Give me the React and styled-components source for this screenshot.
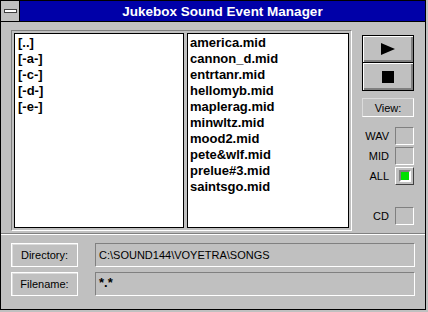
import React from 'react'
import styled, { createGlobalStyle } from 'styled-components'

const GlobalStyle = createGlobalStyle`
    html, body {
        margin: 0;
        padding: 0;
        background: #c0c0c0;
    }
`

const Window = styled.div`
    width: 426px;
    height: 310px;
    box-sizing: border-box;
    border: 1px solid #000;
    background: #c0c0c0;
    display: flex;
    flex-direction: column;
    font-family: "Liberation Sans", Arial, sans-serif;
    color: #000;
`

const TitleBar = styled.div`
    height: 20px;
    display: flex;
    border-bottom: 1px solid #000;
    background: #0000a8;
`

const SysButton = styled.div`
    width: 19px;
    height: 20px;
    box-sizing: border-box;
    background: #c0c0c0;
    border-right: 1px solid #000;
    display: flex;
    align-items: center;
    justify-content: center;

    span{
        display: block;
        width: 11px;
        height: 2px;
        background: #fff;
        border: 1px solid #404040;
    }
`

const Title = styled.div`
    flex: 1;
    display: flex;
    align-items: center;
    justify-content: center;
    color: #fff;
    font-weight: 700;
    font-size: 13.5px;
`

const Upper = styled.div`
    display: flex;
    padding: 8px 0 0 10px;
`

const Frame = styled.div`
    display: flex;
    gap: 3px;
    padding: 2px;
    border: 1px solid;
    border-color: #808080 #fff #fff #808080;
`

const ListBox = styled.div`
    width: ${p => p.w}px;
    height: 195px;
    box-sizing: border-box;
    border: 1px solid #000;
    background: #fff;
    padding: 1px 0 0 ${p => p.pad}px;
    font-size: 13px;
    font-weight: 700;
    line-height: 16px;
`

const Side = styled.div`
    width: 52px;
    margin-left: 10px;
    padding-top: 5px;
    display: flex;
    flex-direction: column;
`

const MediaButton = styled.div`
    height: 28px;
    box-sizing: border-box;
    border: 1px solid #000;
    box-shadow: inset 1px 1px 0 #fff, inset -2px -2px 0 #808080;
    display: flex;
    align-items: center;
    justify-content: center;
    & + &{
        border-top: none;
    }
`

const ViewButton = styled.div`
    margin-top: 7px;
    height: 19px;
    box-sizing: border-box;
    border: 1px solid;
    border-color: #dcdcdc #fff #fff #dcdcdc;
    font-size: 11px;
    display: flex;
    align-items: center;
    justify-content: center;
`

const CheckRow = styled.div`
    display: flex;
    justify-content: flex-end;
    align-items: center;
    gap: 6px;
    height: 18px;
    margin-top: ${p => p.top}px;
    font-size: 11px;
`

const CheckBox = styled.div`
    width: 19px;
    height: 18px;
    box-sizing: border-box;
    border: 1px solid;
    border-color: ${p => p.on ? '#fff #404040 #404040 #fff' : '#808080 #fff #fff #808080'};
    display: flex;
    align-items: center;
    justify-content: center;

    i{
        display: block;
        width: 8px;
        height: 8px;
        background: #00e000;
        border: 2px solid #808080;
        border-right-color: #fff;
        border-bottom-color: #fff;
    }
`

const Divider = styled.div`
    margin-top: 2px;
    border-top: 1px solid #808080;
    border-bottom: 1px solid #fff;
`

const Lower = styled.div`
    display: flex;
    flex-direction: column;
    gap: 5px;
    padding: 8px 0 0 10px;
`

const FieldRow = styled.div`
    display: flex;
    gap: 17px;
`

const LabelButton = styled.div`
    width: 67px;
    height: 24px;
    box-sizing: border-box;
    border: 1px solid;
    border-color: #fff #fff #fff #fff;
    box-shadow: inset 1px 1px 0 #dcdcdc;
    font-size: 11px;
    display: flex;
    align-items: center;
    justify-content: center;
`

const TextField = styled.div`
    width: 320px;
    height: 24px;
    box-sizing: border-box;
    border: 1px solid;
    border-color: #808080 #fff #fff #808080;
    padding: ${p => p.top ? '2px' : '0'} 0 0 3px;
    display: flex;
    align-items: ${p => p.top ? 'flex-start' : 'center'};
    font-size: ${p => p.top ? '13px' : '11px'};
    font-weight: ${p => p.top ? 700 : 400};
`

const dirs = ['[..]', '[-a-]', '[-c-]', '[-d-]', '[-e-]']
const files = ['america.mid', 'cannon_d.mid', 'entrtanr.mid', 'hellomyb.mid', 'maplerag.mid',
    'minwltz.mid', 'mood2.mid', 'pete&wlf.mid', 'prelue#3.mid', 'saintsgo.mid']

const App = () => {
  return (
    <>
      <GlobalStyle />
      <Window>
        <TitleBar>
          <SysButton><span /></SysButton>
          <Title>Jukebox Sound Event Manager</Title>
        </TitleBar>

        <Upper>
          <Frame>
            <ListBox w={170} pad={3}>
              {dirs.map(d => <div key={d}>{d}</div>)}
            </ListBox>
            <ListBox w={162} pad={2}>
              {files.map(f => <div key={f}>{f}</div>)}
            </ListBox>
          </Frame>

          <Side>
            <MediaButton>
              <svg width="16" height="12" viewBox="0 0 16 12"><path d="M1 0 L15 6 L1 12 Z" fill="#000" /></svg>
            </MediaButton>
            <MediaButton>
              <svg width="12" height="12" viewBox="0 0 12 12"><rect width="12" height="12" fill="#000" /></svg>
            </MediaButton>
            <ViewButton>View:</ViewButton>
            <CheckRow top={10}>WAV<CheckBox /></CheckRow>
            <CheckRow top={2}>MID<CheckBox /></CheckRow>
            <CheckRow top={2}>ALL<CheckBox on><i /></CheckBox></CheckRow>
            <CheckRow top={22}>CD<CheckBox /></CheckRow>
          </Side>
        </Upper>

        <Divider />

        <Lower>
          <FieldRow>
            <LabelButton>Directory:</LabelButton>
            <TextField>C:\SOUND144\VOYETRA\SONGS</TextField>
          </FieldRow>
          <FieldRow>
            <LabelButton>Filename:</LabelButton>
            <TextField top>*.*</TextField>
          </FieldRow>
        </Lower>
      </Window>
    </>
  )
}

export default App
